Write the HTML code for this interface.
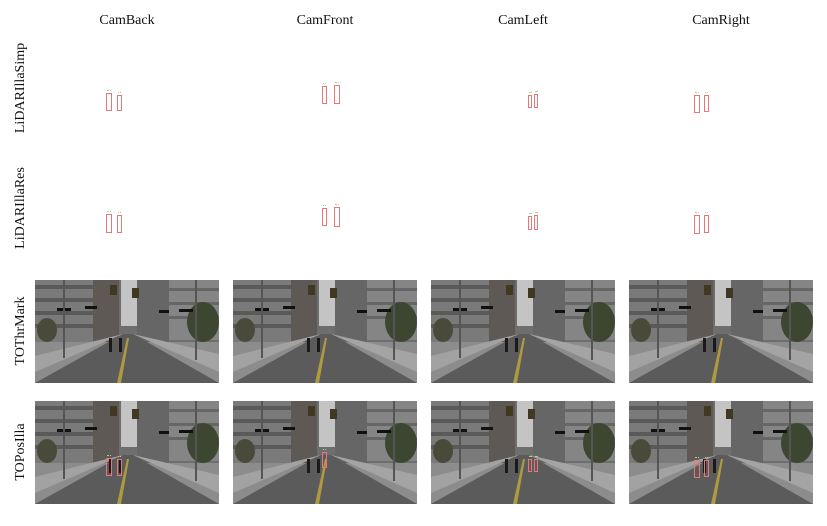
<!DOCTYPE html>
<html><head><style>
body{margin:0;width:827px;height:526px;background:#fff;position:relative;overflow:hidden;font-family:"Liberation Serif",serif;}
.t{position:absolute;top:13px;font-size:14px;width:184px;text-align:center;color:#111}
.r{position:absolute;left:21px;font-size:14px;color:#111;transform:translate(-50%,-50%) rotate(-90deg);white-space:nowrap}
.b{position:absolute;border:1px solid #e87878;box-sizing:border-box}
.b::before{content:"";position:absolute;left:0;top:-4px;width:100%;height:2px;border-top:1px dotted #8ee08e}
svg.s{position:absolute;width:184px;height:103px}
</style></head><body>
<svg width="0" height="0" style="position:absolute">
<defs>
<symbol id="sc" viewBox="0 0 184 103">
<rect width="184" height="103" fill="#6e6e6e"/>
<rect x="86" y="0" width="16" height="46" fill="#c4c4c4"/>
<rect x="0" y="0" width="58" height="68" fill="#7a7a7a"/>
<rect x="0" y="5" width="58" height="4" fill="#5a5a5a"/><rect x="0" y="18" width="58" height="4" fill="#5a5a5a"/><rect x="0" y="31" width="58" height="4" fill="#5a5a5a"/><rect x="0" y="44" width="58" height="4" fill="#5a5a5a"/>
<rect x="58" y="0" width="26" height="68" fill="#5f5955"/>
<rect x="102" y="0" width="32" height="62" fill="#666"/>
<rect x="134" y="0" width="50" height="60" fill="#858585"/>
<rect x="134" y="8" width="50" height="3" fill="#666"/><rect x="134" y="22" width="50" height="3" fill="#666"/><rect x="134" y="36" width="50" height="3" fill="#666"/>
<ellipse cx="168" cy="42" rx="16" ry="20" fill="#3c4630"/>
<ellipse cx="12" cy="50" rx="10" ry="12" fill="#4a4a3a"/>
<rect x="0" y="62" width="184" height="41" fill="#8c8c8c"/>
<polygon points="88,54 98,54 184,103 0,103" fill="#5b5b5b"/>
<polygon points="0,76 88,54 0,92" fill="#a2a2a2"/>
<polygon points="184,74 98,54 184,92" fill="#a4a4a4"/>
<polygon points="92,58 94,58 86,103 82,103" fill="#b09a40"/>
<rect x="75" y="5" width="7" height="10" fill="#403820"/><rect x="97" y="8" width="7" height="10" fill="#403820"/>
<rect x="22" y="28" width="14" height="3" fill="#111"/><rect x="50" y="26" width="12" height="3" fill="#111"/><rect x="124" y="30" width="10" height="3" fill="#111"/><rect x="144" y="29" width="14" height="3" fill="#111"/>
<rect x="28" y="0" width="2" height="78" fill="#555"/><rect x="160" y="0" width="2" height="80" fill="#555"/>
<rect x="74" y="58" width="3" height="14" fill="#1a1a1a"/><rect x="84" y="58" width="3" height="14" fill="#1a1a1a"/>
</symbol>
</defs></svg>
<div class="t" style="left:35px">CamBack</div>
<div class="t" style="left:233px">CamFront</div>
<div class="t" style="left:431px">CamLeft</div>
<div class="t" style="left:629px">CamRight</div>
<div class="r" style="top:88px">LiDARIllaSimp</div>
<div class="r" style="top:208px">LiDARIllaRes</div>
<div class="r" style="top:331px">TOThrMark</div>
<div class="r" style="top:452px">TOPosIlla</div>

<div class="b" style="left:106px;top:93px;width:6px;height:18px"></div><div class="b" style="left:117px;top:95px;width:5px;height:16px"></div>
<div class="b" style="left:322px;top:86px;width:5px;height:18px"></div><div class="b" style="left:334px;top:85px;width:6px;height:19px"></div>
<div class="b" style="left:528px;top:95px;width:4px;height:13px"></div><div class="b" style="left:534px;top:94px;width:4px;height:14px"></div>
<div class="b" style="left:694px;top:95px;width:6px;height:18px"></div><div class="b" style="left:704px;top:95px;width:5px;height:17px"></div>

<div class="b" style="left:106px;top:214px;width:6px;height:19px"></div><div class="b" style="left:117px;top:215px;width:5px;height:18px"></div>
<div class="b" style="left:322px;top:208px;width:5px;height:18px"></div><div class="b" style="left:334px;top:207px;width:6px;height:20px"></div>
<div class="b" style="left:528px;top:216px;width:4px;height:14px"></div><div class="b" style="left:534px;top:215px;width:4px;height:15px"></div>
<div class="b" style="left:694px;top:215px;width:6px;height:19px"></div><div class="b" style="left:704px;top:215px;width:5px;height:18px"></div>

<svg class="s" style="left:35px;top:280px"><use href="#sc"/></svg>
<svg class="s" style="left:233px;top:280px"><use href="#sc"/></svg>
<svg class="s" style="left:431px;top:280px"><use href="#sc"/></svg>
<svg class="s" style="left:629px;top:280px"><use href="#sc"/></svg>
<svg class="s" style="left:35px;top:401px"><use href="#sc"/></svg>
<svg class="s" style="left:233px;top:401px"><use href="#sc"/></svg>
<svg class="s" style="left:431px;top:401px"><use href="#sc"/></svg>
<svg class="s" style="left:629px;top:401px"><use href="#sc"/></svg>

<div class="b" style="left:106px;top:458px;width:6px;height:18px"></div><div class="b" style="left:117px;top:459px;width:5px;height:17px"></div>
<div class="b" style="left:322px;top:452px;width:5px;height:16px"></div>
<div class="b" style="left:528px;top:459px;width:4px;height:13px"></div><div class="b" style="left:534px;top:459px;width:4px;height:13px"></div>
<div class="b" style="left:694px;top:460px;width:6px;height:18px"></div><div class="b" style="left:704px;top:460px;width:5px;height:17px"></div>
</body></html>
